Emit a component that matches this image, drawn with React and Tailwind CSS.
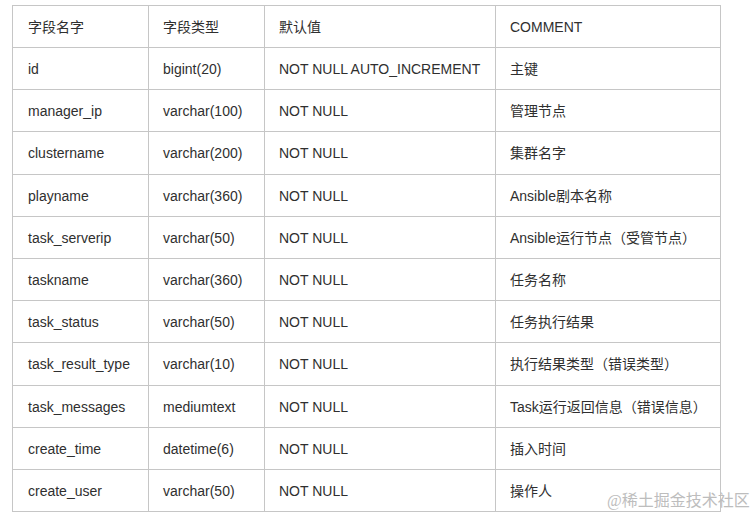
import React from "react";

const rows = [
  ["id", "bigint(20)", "NOT NULL AUTO_INCREMENT", "主键"],
  ["manager_ip", "varchar(100)", "NOT NULL", "管理节点"],
  ["clustername", "varchar(200)", "NOT NULL", "集群名字"],
  ["playname", "varchar(360)", "NOT NULL", "Ansible剧本名称"],
  ["task_serverip", "varchar(50)", "NOT NULL", "Ansible运行节点（受管节点）"],
  ["taskname", "varchar(360)", "NOT NULL", "任务名称"],
  ["task_status", "varchar(50)", "NOT NULL", "任务执行结果"],
  ["task_result_type", "varchar(10)", "NOT NULL", "执行结果类型（错误类型）"],
  ["task_messages", "mediumtext", "NOT NULL", "Task运行返回信息（错误信息）"],
  ["create_time", "datetime(6)", "NOT NULL", "插入时间"],
  ["create_user", "varchar(50)", "NOT NULL", "操作人"],
];

const heights = ["h-[42px]", "h-[42px]", "h-[42px]", "h-[43px]", "h-[42px]", "h-[42px]", "h-[42px]", "h-[42px]", "h-[43px]", "h-[42px]", "h-[42px]", "h-[42px]"];

export default function App() {
  return (
    <div
      className="relative w-[755px] h-[519px] bg-white overflow-hidden pl-[12px] pt-[5px] text-[14px] text-[#2f2f2f]"
      style={{ fontFamily: '"Liberation Sans", "Noto Sans CJK SC", sans-serif' }}
    >
      <table className="table-fixed border-collapse w-[708px]">
        <colgroup>
          <col className="w-[136px]" />
          <col className="w-[116px]" />
          <col className="w-[231px]" />
          <col className="w-[225px]" />
        </colgroup>
        <thead>
          <tr className={heights[0]}>
            {["字段名字", "字段类型", "默认值", "COMMENT"].map((h, j) => (
              <th
                key={h}
                className={
                  j === 0
                    ? "border border-[#c6c6c6] pl-[15px] pr-[10px] py-0 text-left font-normal leading-[20px]"
                    : "border border-[#c6c6c6] pl-[14px] pr-[10px] py-0 text-left font-normal leading-[20px]"
                }
              >
                {h}
              </th>
            ))}
          </tr>
        </thead>
        <tbody>
          {rows.map((r, i) => (
            <tr key={i} className={heights[i + 1]}>
              {r.map((c, j) => (
                <td
                  key={j}
                  className={
                    j === 0
                      ? "border border-[#c6c6c6] pl-[15px] pr-[10px] py-0 leading-[20px] whitespace-nowrap"
                      : "border border-[#c6c6c6] pl-[14px] pr-[10px] py-0 leading-[20px] whitespace-nowrap"
                  }
                >
                  {c}
                </td>
              ))}
            </tr>
          ))}
        </tbody>
      </table>
      <div
        className="absolute left-[607px] top-[490px] text-[16px] leading-[22px] text-[#bdbdbd] whitespace-nowrap"
        style={{ fontFamily: '"Liberation Serif", "Noto Sans CJK SC", serif' }}
      >
        @稀土掘金技术社区
      </div>
    </div>
  );
}
